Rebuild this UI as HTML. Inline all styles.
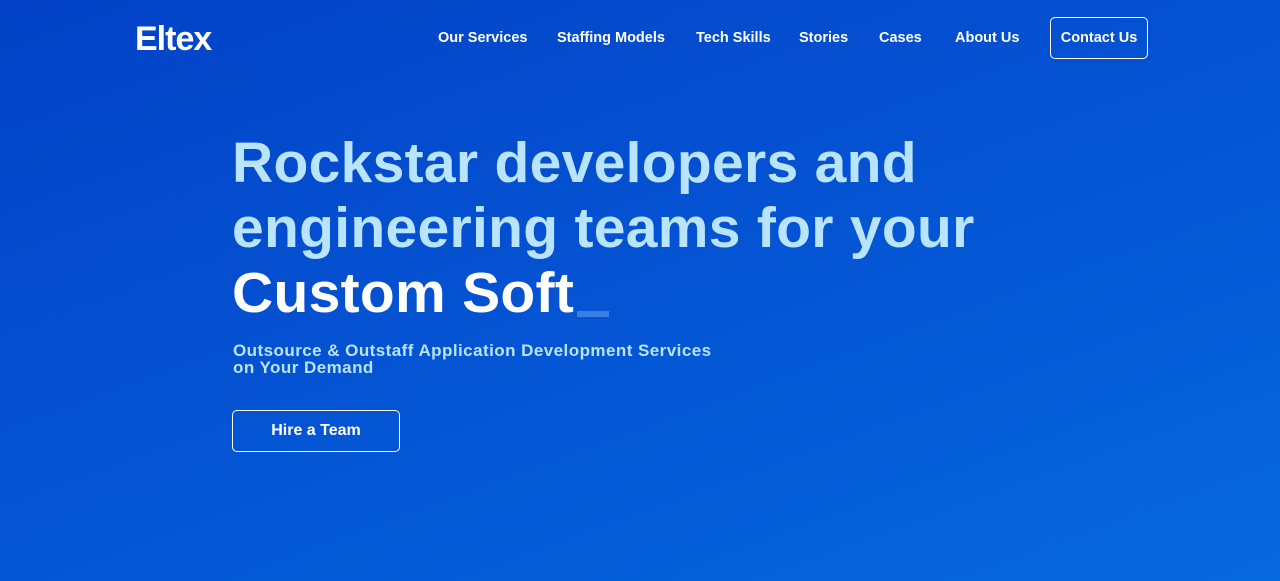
<!DOCTYPE html>
<html><head><meta charset="utf-8"><style>
html,body{margin:0;padding:0}
body{width:1280px;height:581px;overflow:hidden;background:linear-gradient(160deg,#0342c6 0%,#0452d2 45%,#0668de 100%);font-family:"Liberation Sans",sans-serif;position:relative;color:#fff}
.logo{position:absolute;left:135px;top:20px;font-size:34px;font-weight:bold;letter-spacing:-1px;color:#fff}
.nav{position:absolute;top:30px;font-size:14.5px;font-weight:bold;color:#fff}
.btnc{position:absolute;left:1050px;top:17px;width:96px;height:40px;border:1.5px solid #fff;border-radius:5px;font-size:14.5px;font-weight:bold;display:flex;align-items:center;justify-content:center}
h1{position:absolute;left:232px;top:131px;margin:0;font-size:57px;line-height:65px;font-weight:bold;color:#b8e4ff;letter-spacing:0.3px}
h1 .w{color:#fff}
.cur{position:absolute;left:577px;top:311px;width:32px;height:6px;background:#3a7fe0}
.sub{position:absolute;left:233px;top:342px;font-size:17px;font-weight:bold;line-height:17px;color:#b8e4ff;letter-spacing:0.45px}
.hire{position:absolute;left:232px;top:410px;width:166px;height:40px;border:1.5px solid #fff;border-radius:5px;font-size:16px;font-weight:bold;display:flex;align-items:center;justify-content:center}
</style></head><body>
<div class="logo">Eltex</div>
<div class="nav" style="left:438px">Our Services</div>
<div class="nav" style="left:557px">Staffing Models</div>
<div class="nav" style="left:696px">Tech Skills</div>
<div class="nav" style="left:799px">Stories</div>
<div class="nav" style="left:879px">Cases</div>
<div class="nav" style="left:955px">About Us</div>
<div class="btnc">Contact Us</div>
<h1>Rockstar developers and<br>engineering teams for your<br><span class="w">Custom Soft</span></h1>
<div class="cur"></div>
<div class="sub">Outsource &amp; Outstaff Application Development Services<br>on Your Demand</div>
<div class="hire">Hire a Team</div>
</body></html>
